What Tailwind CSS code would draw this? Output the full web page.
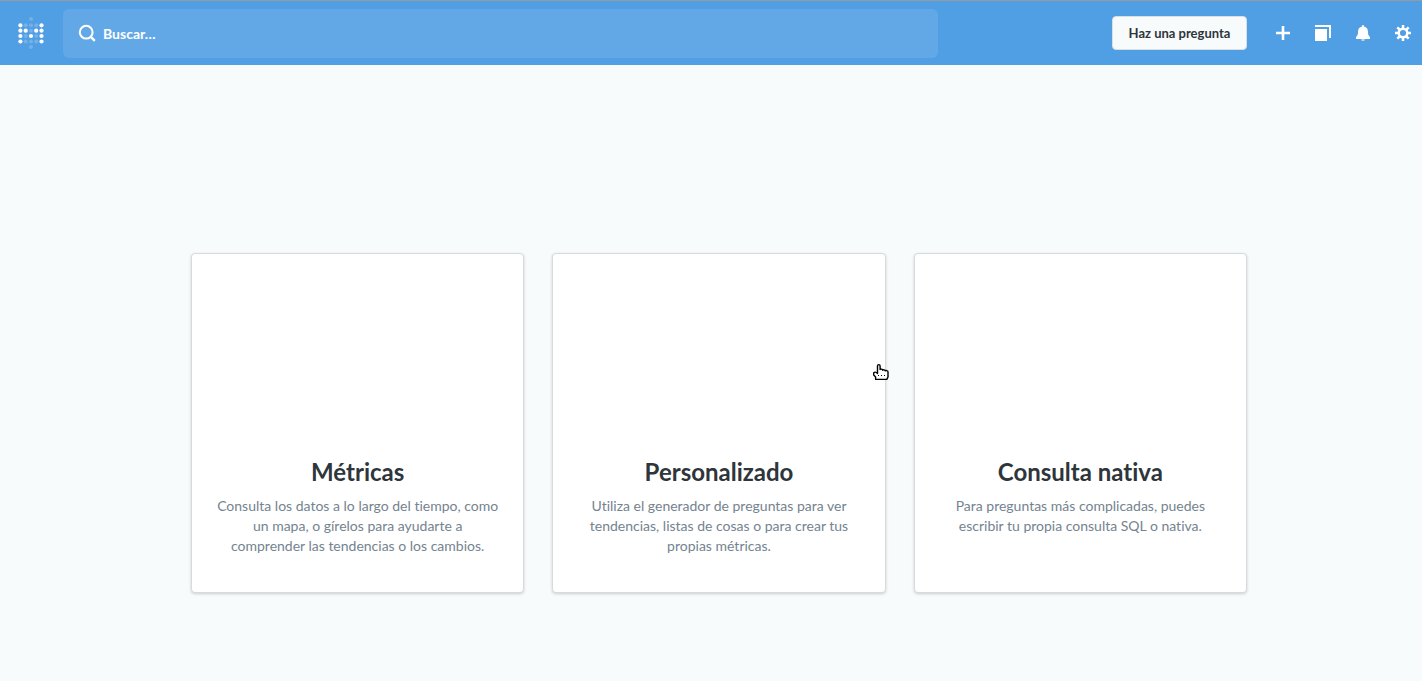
<!DOCTYPE html>
<html lang="es">
<head>
<meta charset="utf-8">
<meta name="viewport" content="width=device-width, initial-scale=1">
<title>Nueva pregunta</title>
<script src="https://cdn.jsdelivr.net/npm/@tailwindcss/browser@4"></script>
</head>
<body class="flex min-h-screen flex-col bg-[#f7fbfc] font-['Lato',sans-serif] text-[#2e353b] [font-variant-ligatures:none]">
<header class="flex h-[65px] items-center border-t border-[#949aa0] bg-[#509ee3] pr-[9px] pl-4 text-white">
  <a href="#" aria-label="Inicio" class="mr-4 flex w-[31px] shrink-0">
    <svg class="h-8 w-[30px]" viewBox="0 0 30 32" fill="white">
      <g fill-opacity=".2">
        <circle cx="15" cy="2" r="2"/>
        <circle cx="9.7" cy="8.3" r="2"/><circle cx="15" cy="8.3" r="2"/><circle cx="20.2" cy="8.3" r="2"/>
        <circle cx="15" cy="13.7" r="2"/>
        <circle cx="9.7" cy="19" r="2"/><circle cx="20.2" cy="19" r="2"/>
        <circle cx="9.7" cy="24.5" r="2"/><circle cx="15" cy="24.5" r="2"/><circle cx="20.2" cy="24.5" r="2"/>
        <circle cx="15" cy="30" r="2"/>
      </g>
      <circle cx="4.4" cy="8.3" r="2.1"/><circle cx="25.5" cy="8.3" r="2.1"/>
      <circle cx="4.4" cy="13.7" r="2.1"/><circle cx="9.7" cy="13.7" r="2.1"/><circle cx="20.2" cy="13.7" r="2.1"/><circle cx="25.5" cy="13.7" r="2.1"/>
      <circle cx="4.4" cy="19" r="2.1"/><circle cx="15" cy="19" r="2.1"/><circle cx="25.5" cy="19" r="2.1"/>
      <circle cx="4.4" cy="24.5" r="2.1"/><circle cx="25.5" cy="24.5" r="2.1"/>
    </svg>
  </a>
  <label class="flex h-[49px] min-w-0 flex-1 items-center gap-2 rounded-md bg-[#62a8e6] pl-4">
    <svg class="size-4 shrink-0 overflow-visible" viewBox="0 0 16 16" fill="none" stroke="white" stroke-width="2"><circle cx="7.2" cy="7.2" r="6.4"/><path d="M11.8 11.8 15.8 15.8" stroke-width="2.4"/></svg>
    <input type="text" aria-label="Buscar" placeholder="Buscar…" class="min-w-0 flex-1 bg-transparent pt-[2px] text-sm font-bold outline-none placeholder:text-white">
  </label>
  <div class="ml-4 flex shrink-0 items-center justify-end gap-5 lg:ml-[174px]">
    <button class="mr-[6px] h-[34px] w-[135px] rounded border border-[#dcdfe0] bg-[#f7fbfc] pt-px text-[13px] font-bold text-[#2e353b]">Haz una pregunta</button>
    <button aria-label="Crear" class="flex size-5 items-center justify-center"><svg class="size-[14px]" viewBox="0 0 14 14" fill="white"><path d="M5.7 0h2.6v5.7H14v2.6H8.3V14H5.7V8.3H0V5.7h5.7z"/></svg></button>
    <button aria-label="Referencia" class="flex size-5 items-center justify-center"><svg class="size-4" viewBox="0 0 16 16" fill="white"><path d="M0 4h12v12H0zM0 0h16v13h-2V2H0z"/></svg></button>
    <button aria-label="Actividad" class="flex size-5 items-center justify-center"><svg class="size-4" viewBox="0 0 16 16" fill="white"><path d="M7 1.6V1a1 1 0 0 1 2 0v.6c2.7.5 4 2.7 4 5.2 0 3 .5 4 2 5.2V14H1v-2c1.5-1.2 2-2.2 2-5.200 0-2.500 1.300-4.700 4-5.200z"/><path d="M6 14.300h4a2 1.700 0 0 1-4 0z" fill-opacity=".7"/></svg></button>
    <button aria-label="Ajustes" class="flex size-5 items-center justify-center"><svg class="size-4" viewBox="0 0 16 16" fill="none" stroke="white"><circle cx="8" cy="8" r="4.300" stroke-width="2.500"/><path d="M8 0v3M8 13v3M0 8h3M13 8h3M2.300 2.300 4.400 4.400M11.600 11.600l2.100 2.100M2.300 13.700l2.100-2.100M11.600 4.400l2.100-2.100" stroke-width="2.500"/></svg></button>
  </div>
</header>
<main class="flex-1 px-4 pt-[188px] pb-8 lg:pr-[175px] lg:pl-[191px]">
  <div class="grid grid-cols-1 gap-7 md:grid-cols-3">
    <a href="#" class="min-h-[340px] rounded border border-[#d7dbde] bg-white px-6 pt-[200px] pb-9 text-center shadow-[0_1px_3px_rgba(0,0,0,0.18)]">
      <h2 class="text-2xl leading-9 font-bold">Métricas</h2>
      <p class="mt-[6px] text-sm leading-5 text-[#74838f]">Consulta los datos a lo largo del tiempo, como un mapa, o gírelos para ayudarte a comprender las tendencias o los cambios.</p>
    </a>
    <a href="#" class="relative min-h-[340px] rounded border border-[#d7dbde] bg-white px-6 pt-[200px] pb-9 text-center shadow-[0_1px_3px_rgba(0,0,0,0.18)]">
      <h2 class="text-2xl leading-9 font-bold">Personalizado</h2>
      <p class="mt-[6px] text-sm leading-5 text-[#74838f]">Utiliza el generador de preguntas para ver tendencias, listas de cosas o para crear tus propias métricas.</p>
      <svg class="absolute top-[110px] -right-1 h-[18px] w-4 overflow-visible" viewBox="0 0 16 18" aria-hidden="true"><path d="M4.500 9.500V2c0-1.800 2.600-1.800 2.600 0v3.600c.3-.8 2.600-.6 2.600.6.300-.7 2.600-.5 2.600.7.300-.6 2.700-.4 2.700.9V13l-1.200 2.400H2.600V13L.7 11V8.700c1-.8 2.700-.5 3.800.8z" fill="white" stroke="black" stroke-width="1.400" stroke-linejoin="round"/><path d="M5 11.500h1M8 11.500h1M11 11.500h1" stroke="black"/></svg>
    </a>
    <a href="#" class="min-h-[340px] rounded border border-[#d7dbde] bg-white px-6 pt-[200px] pb-9 text-center shadow-[0_1px_3px_rgba(0,0,0,0.18)]">
      <h2 class="text-2xl leading-9 font-bold">Consulta nativa</h2>
      <p class="mt-[6px] text-sm leading-5 text-[#74838f]">Para preguntas más complicadas, puedes escribir tu propia consulta SQL o nativa.</p>
    </a>
  </div>
</main>
</body>
</html>
